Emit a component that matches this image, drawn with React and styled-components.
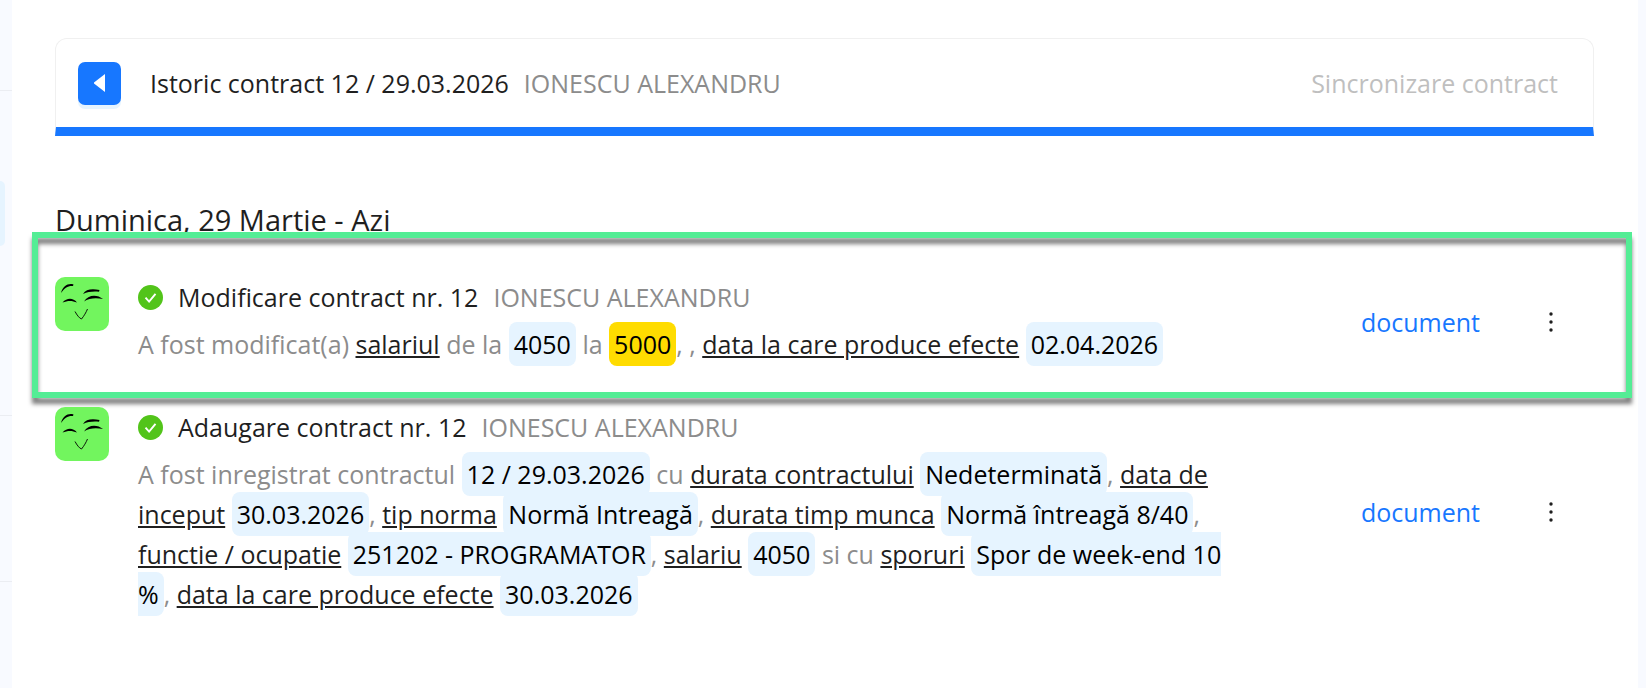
import React from "react";
import styled, { createGlobalStyle } from "styled-components";

const person = "IONESCU ALEXANDRU";

export default function App() {
	return (
		<Page>
			<GlobalStyle />
			<Sidebar>
				<SideGroup $height={83} />
				<SideGroup $height={325}>
					<SideActive />
				</SideGroup>
				<SideGroup $height={166} />
			</Sidebar>
			<Main>
				<Header>
					<BackButton type="button" aria-label="Inapoi">
						<svg width="11" height="18" viewBox="0 0 11 18">
							<path d="M11 0v18L0 9.6v-1.2z" fill="#fff" />
						</svg>
					</BackButton>
					<HeaderTitle>
						Istoric contract 12 / 29.03.2026
						<Person>{person}</Person>
					</HeaderTitle>
					<SyncButton type="button" disabled>Sincronizare contract</SyncButton>
				</Header>
				<Day>Duminica, 29 Martie - Azi</Day>
				<List>
					<Entry title="Modificare contract nr. 12" highlighted>
						A fost modificat(a) <Field>salariul</Field> de la <Chip>4050</Chip> la{" "}
						<Chip $changed>5000</Chip>, , <Field>data la care produce efecte</Field>{" "}
						<Chip>02.04.2026</Chip>
					</Entry>
					<Entry title="Adaugare contract nr. 12">
						A fost inregistrat contractul <Chip>12 / 29.03.2026</Chip> cu{" "}
						<Field>durata contractului</Field> <Chip>Nedeterminată</Chip>,{" "}
						<Field>data de inceput</Field> <Chip>30.03.2026</Chip>,{" "}
						<Field>tip norma</Field> <Chip>Normă Intreagă</Chip>,{" "}
						<Field>durata timp munca</Field> <Chip>Normă întreagă 8/40</Chip>,{" "}
						<Field>functie / ocupatie</Field> <Chip>251202 - PROGRAMATOR</Chip>,{" "}
						<Field>salariu</Field> <Chip>4050</Chip> si cu <Field>sporuri</Field>{" "}
						<Chip>Spor de week-end 10 %</Chip>,{" "}
						<Field>data la care produce efecte</Field> <Chip>30.03.2026</Chip>
					</Entry>
				</List>
			</Main>
		</Page>
	);
}

function Entry({ title, highlighted, children }) {
	return (
		<Row>
			{highlighted && <Highlight />}
			<Avatar />
			<Content>
				<EntryTitle>
					<CheckIcon />
					<span>{title}</span>
					<Person>{person}</Person>
				</EntryTitle>
				<Description>{children}</Description>
			</Content>
			<Actions>
				<DocLink href="#document">document</DocLink>
				<MoreButton type="button" aria-label="Optiuni">
					<svg width="4" height="20" viewBox="0 0 4 20" fill="#1f1f1f">
						<circle cx="2" cy="2" r="1.7" />
						<circle cx="2" cy="10" r="1.7" />
						<circle cx="2" cy="18" r="1.7" />
					</svg>
				</MoreButton>
			</Actions>
		</Row>
	);
}

function Avatar() {
	return (
		<Face viewBox="0 0 54 54">
			<rect width="54" height="54" rx="10" fill="#72f55e" />
			<path d="M6 16C8 9 13 6 18.500 7.500L18 9C13 8.500 9.500 11 6 16z" />
			<path d="M28 17C31 12 37 11.500 44.500 13L44 14.800C38 14.300 33 14.800 28 17z" />
			<path d="M7.500 25.500C12 20.500 18 20.500 22 25.500C17 23.300 12.500 23.500 7.500 25.500z" />
			<path d="M29 24.500C33 17.500 42 17 48 22C41 20.500 34 21 29 24.500z" />
			<path d="M20 34.500C22 38 24 41 26.500 42C29 39 31 35.500 32.500 32" fill="none" stroke="#000" strokeWidth="0.900" />
		</Face>
	);
}

function CheckIcon() {
	return (
		<svg width="25" height="25" viewBox="0 0 25 25">
			<circle cx="12.5" cy="12.5" r="12.5" fill="#52c41a" />
			<path d="M7.500 12.700l3.600 3.900 6.400-7.800" fill="none" stroke="#fff" strokeWidth="1.900" />
		</svg>
	);
}

const GlobalStyle = createGlobalStyle`
	* {
		box-sizing: border-box;
	}
	body {
		margin: 0;
		background: #fff;
		font-family: "Open Sans", "Noto Sans", sans-serif;
		font-size: 25px;
		line-height: 40px;
		color: #1f1f1f;
	}
	button {
		font: inherit;
		border: 0;
		padding: 0;
		background: none;
	}
`;

const Page = styled.div`
	display: flex;
	min-height: 100vh;
	border-right: 8px solid #f8faff;
`;

const Sidebar = styled.aside`
	flex: none;
	width: 12px;
	background: #f8faff;
`;

const SideGroup = styled.div`
	height: ${(props) => props.$height}px;
	padding-top: 90px;
	border-bottom: 1px solid #ebedf2;
`;

const SideActive = styled.div`
	width: 5px;
	height: 65px;
	border-radius: 0 8px 8px 0;
	background: #e6f4ff;
`;

const Main = styled.main`
	flex: 1;
	min-width: 0;
	padding: 38px 44px 38px 43px;
`;

const Header = styled.header`
	display: flex;
	align-items: center;
	height: 98px;
	padding: 0 35px 0 22px;
	border: 1px solid #f0f0f0;
	border-bottom: 9px solid #1777ff;
	border-radius: 12px 12px 0 0;
`;

const BackButton = styled.button`
	display: flex;
	align-items: center;
	justify-content: center;
	width: 43px;
	height: 43px;
	margin-right: 29px;
	border-radius: 7px;
	background: #1777ff;
	box-shadow: 0 4px 0 rgba(5, 145, 255, 0.1);
`;

const HeaderTitle = styled.h1`
	flex: 1;
	margin: 0;
	font-size: 25px;
	font-weight: 500;
`;

const Person = styled.span`
	margin-left: 15px;
	font-weight: 400;
	color: #8c8c8c;
`;

const SyncButton = styled.button`
	color: #bfbfbf;
`;

const Day = styled.h2`
	margin: 64px 0 0;
	font-size: 29px;
	font-weight: 500;
`;

const List = styled.div`
	display: flex;
	flex-direction: column;
	gap: 40px;
	margin-top: 37px;
`;

const Row = styled.article`
	position: relative;
	display: flex;
	align-items: flex-start;
	gap: 29px;
`;

/* frame drawn over the entry that changed */
const Highlight = styled.div`
	position: absolute;
	inset: -45px -38px -31px -23px;
	border: 6px solid #54ed95;
	filter: drop-shadow(0 6px 2px rgba(0, 0, 0, 0.5));
	pointer-events: none;
`;

const Face = styled.svg`
	flex: none;
	width: 54px;
	height: 54px;
`;

const Content = styled.div`
	flex: 1;
	max-width: 1104px;
`;

const EntryTitle = styled.h3`
	display: flex;
	align-items: center;
	margin: 0;
	font-size: 25px;
	font-weight: 500;

	svg {
		margin-right: 15px;
	}
`;

const Description = styled.p`
	margin: 7px 0 3px;
	color: #8c8c8c;
`;

const Field = styled.span`
	font-weight: 500;
	color: #1f1f1f;
	text-decoration: underline;
`;

const Chip = styled.span`
	padding: 5px;
	border-radius: 8px;
	background: ${(props) => (props.$changed ? "#ffdc00" : "#e6f4ff")};
	font-weight: 500;
	color: #000;
`;

const Actions = styled.div`
	display: flex;
	align-items: center;
	align-self: center;
	gap: 58px;
	margin-left: auto;
	padding-right: 30px;
`;

const DocLink = styled.a`
	color: #1777ff;
	text-decoration: none;
`;

const MoreButton = styled.button`
	display: flex;
	align-items: center;
	justify-content: center;
	width: 26px;
	height: 40px;
`;
